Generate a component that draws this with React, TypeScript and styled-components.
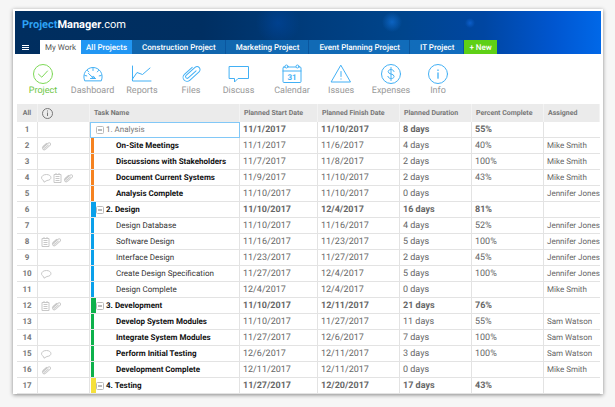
import React from "react";
import styled, { createGlobalStyle } from "styled-components";

const GlobalStyle = createGlobalStyle`
  * { box-sizing: border-box; }
  body {
    margin: 0;
    background: #f6f6f6;
    font-family: Roboto, "Liberation Sans", sans-serif;
    font-size: 9px;
    color: #666;
    text-rendering: geometricPrecision;
  }
  button {
    font: inherit;
    color: inherit;
    border: 0;
    padding: 0;
    margin: 0;
    background: none;
    cursor: pointer;
    text-rendering: inherit;
  }
`;

const Card = styled.main`
  margin: 9px 12px 13px 13px;
  padding: 2px 2px 0;
  background: #fff;
  box-shadow: 0 1px 4px rgba(0, 0, 0, 0.45);
  overflow: hidden;
`;

const Banner = styled.header`
  background:
    radial-gradient(circle at 263px 12px, rgba(0, 80, 190, 0.35) 0, transparent 22px),
    radial-gradient(circle at 377px 11px, rgba(20, 120, 230, 0.6) 0, transparent 10px),
    radial-gradient(circle at 455px 12px, rgba(20, 110, 230, 0.6) 0, transparent 5px),
    linear-gradient(90deg, #002e5f 0%, #002f62 32%, #003c7c 50%, #00458c 66%, #0046a2 80%, #0056d0 92%, #0068e8 100%);
`;

const Brand = styled.div`
  display: flex;
  align-items: center;
  height: 29px;
  padding: 0 7px 3px;
  font-size: 11px;
  color: #fff;
`;

const BrandBlue = styled.span`
  font-weight: 700;
  color: #2ea3f5;
`;

const BrandBold = styled.span`
  font-weight: 700;
`;

const TabBar = styled.nav`
  display: flex;
  height: 14px;
  font-size: 8px;
`;

const MenuButton = styled.button`
  display: flex;
  align-items: center;
  width: 25px;
  padding-left: 7px;
  color: #fff;
`;

type TabKind = "current" | "bright" | "plain" | "create";

const tabFill: Record<TabKind, string> = {
  current: "#fff",
  bright: "#2196f3",
  plain: "rgba(24, 125, 205, 0.7)",
  create: "#5fd016",
};

const Tab = styled.button<{ $kind: TabKind }>`
  padding: 0 ${(p) => (p.$kind === "plain" ? 10 : 5)}px;
  line-height: 15px;
  white-space: nowrap;
  font-weight: ${(p) => (p.$kind === "current" ? 400 : 500)};
  color: ${(p) => (p.$kind === "current" ? "#555" : "#fff")};
  background: ${(p) => tabFill[p.$kind]};
  box-shadow: ${(p) => (p.$kind === "plain" ? "inset -1px 0 #0a569f" : "none")};
`;

const Toolbar = styled.nav`
  display: grid;
  grid-template-columns: 50px 49px 50px 48px 47px 60px 38px 62px 32px;
  height: 50px;
  padding: 9px 0 0 3px;
`;

const Tool = styled.button<{ $active?: boolean }>`
  display: flex;
  flex-direction: column;
  align-items: center;
  gap: 1px;
  line-height: 13px;
  color: ${(p) => (p.$active ? "#6cc644" : "#999")};

  svg {
    color: ${(p) => (p.$active ? "#7ed957" : "#42b0f5")};
  }
`;

const Grid = styled.table`
  width: calc(100% - 3px);
  margin: 0 1px 0 2px;
  table-layout: fixed;
  border-collapse: separate;
  border-spacing: 0;
`;

const Head = styled.th`
  height: 18px;
  padding: 0 4px;
  text-align: left;
  font-size: 7px;
  line-height: 16px;
  font-weight: 700;
  color: #777;
  background: #ebebeb;
  border-right: 1px solid #f3f3f3;
  white-space: nowrap;
  overflow: hidden;

  &:first-child {
    padding: 0;
    text-align: center;
  }

  svg {
    display: block;
  }
`;

const Cell = styled.td<{ $bold?: boolean; $small?: boolean }>`
  height: 16px;
  padding: 1px 3px 0;
  line-height: 14px;
  font-size: ${(p) => (p.$small ? 8 : 9)}px;
  font-weight: ${(p) => (p.$bold ? 700 : 400)};
  border-right: 1px solid #e3e3e3;
  border-bottom: 1px solid #e3e3e3;
  white-space: nowrap;
  overflow: hidden;

  &:last-child {
    border-right: 0;
  }
`;

const NumberCell = styled(Cell)`
  padding: 1px 0 0;
  text-align: center;
  font-size: 8px;
  font-weight: 700;
  color: #777;
`;

const Marks = styled.div`
  display: flex;
  align-items: center;
  gap: 1px;
  height: 14px;
  color: #c8c8c8;
`;

const NameCell = styled(Cell)<{ $selected?: boolean }>`
  padding: 0;
  font-size: 8px;
  color: ${(p) => (p.$selected ? "#777" : p.$bold ? "#111" : "#333")};
  outline: ${(p) => (p.$selected ? "1px solid #82c8f7" : "none")};
  outline-offset: -1px;
`;

const NameLine = styled.div`
  display: flex;
  align-items: center;
  height: 15px;
  line-height: 16px;
`;

const Stripe = styled.span<{ $color: string; $wide?: boolean }>`
  flex: none;
  align-self: stretch;
  width: ${(p) => (p.$wide ? 5 : 3)}px;
  margin: 0 ${(p) => (p.$wide ? 0 : 22)}px -1px 1px;
  background: ${(p) => p.$color};
`;

const Toggle = styled.button`
  display: flex;
  margin-right: 2px;
  color: #aaa;
`;

const stroke = { fill: "none", stroke: "currentColor", strokeWidth: 1 } as const;

const ToolSvg = ({ children }: { children: React.ReactNode }) => (
  <svg width="22" height="21" viewBox="0 0 22 21" {...stroke} strokeLinejoin="round" strokeLinecap="round">
    {children}
  </svg>
);

const PaperClip = () => (
  <path
    transform="translate(11.500 11) rotate(-42)"
    d="M5-4.500H-5.500a4 4 0 0 0 0 8H7a3 3 0 0 0 0-6H-5a1.600 1.600 0 0 0 0 3.200H5.500"
  />
);

const tools: { label: string; icon: React.ReactNode }[] = [
  { label: "Project", icon: <><circle cx="11" cy="11" r="9.500" /><path d="M6.500 11.200 9.800 14.200 15.500 8" /></> },
  {
    label: "Dashboard",
    icon: <>
      <path d="M2.600 17.500C-.2 10.500 5 4.500 11 4.500s11.200 6 8.400 13Z" />
      <path d="M11 5.500v2M5.500 7.500l1.200 1.400M16.500 7.500l-1.200 1.400M2.800 12.500l2 .4M19.200 12.500l-2 .4M6.500 10.500l4 3.800M8.500 15.500h5" />
      <circle cx="11.300" cy="14.400" r="1" />
    </>,
  },
  { label: "Reports", icon: <path d="M1.500 3v15H20M1.500 16 6 9.500l5.500 2L19 5" /> },
  { label: "Files", icon: <PaperClip /> },
  { label: "Discuss", icon: <path d="M1.500 3.500h19v12H10L6.500 19v-3.500h-5Z" /> },
  {
    label: "Calendar",
    icon: <>
      <rect x="2" y="4" width="18" height="15.500" rx="1" />
      <path d="M2 8h18" />
      <circle cx="5.500" cy="3.500" r="1.500" fill="#fff" />
      <circle cx="16.500" cy="3.500" r="1.500" fill="#fff" />
      <text x="11" y="16.500" textAnchor="middle" fontSize="8" fontWeight="700" fill="currentColor" stroke="none">31</text>
    </>,
  },
  { label: "Issues", icon: <><path d="M11 2.500 20.500 19h-19Z" /><path d="M11 8.500v5M11 15.800v.4" /></> },
  {
    label: "Expenses",
    icon: <><circle cx="11" cy="11" r="9.500" /><path d="M14 8.500c-.4-2.800-5.800-2.700-5.800.2 0 3 5.900 1.700 5.900 4.700 0 2.900-5.800 3-6.200 0M11 4.500v13" /></>,
  },
  { label: "Info", icon: <><circle cx="11" cy="11" r="9.500" /><path d="M11 9.800v5.400M11 7v.4" strokeWidth="1.300" /></> },
];

const ClipMark = () => (
  <svg width="11" height="11" viewBox="0 0 23 23" {...stroke} strokeWidth={2}>
    <PaperClip />
  </svg>
);

const NoteMark = () => (
  <svg width="9" height="10" viewBox="0 0 9 10" {...stroke}>
    <path d="M1 1.500h7v8H1ZM2.500 3.500h4M2.500 5.500h4M2.500 7.500h4M3 0v2M6 0v2" />
  </svg>
);

const ChatMark = () => (
  <svg width="11" height="10" viewBox="0 0 11 10" {...stroke}>
    <path d="M2.600 7.500C-1 6 .2 1.500 5.500 1.500s6.300 5.600.4 6L3 9.200Z" />
  </svg>
);

const MinusBox = () => (
  <svg width="8" height="8" viewBox="0 0 8 8" {...stroke}>
    <rect x=".5" y=".5" width="7" height="7" rx="1" stroke="#bbb" />
    <path d="M2 4h4" stroke="#777" />
  </svg>
);

const markIcons = { chat: ChatMark, note: NoteMark, clip: ClipMark };
type Mark = keyof typeof markIcons;

interface Task {
  name: string;
  start: string;
  finish: string;
  days: number;
  percent?: string;
  assigned?: string;
  group?: boolean;
  bold?: boolean;
  color?: string;
  marks?: Mark[];
}

const ORANGE = "#f58220";
const BLUE = "#0aa0ea";
const GREEN = "#0db14b";
const YELLOW = "#f5e03c";

const tasks: Task[] = [
  { name: "1. Analysis", start: "11/1/2017", finish: "11/10/2017", days: 8, percent: "55%", group: true },
  { name: "On-Site Meetings", start: "11/1/2017", finish: "11/6/2017", days: 4, percent: "40%", assigned: "Mike Smith", bold: true, color: ORANGE, marks: ["clip"] },
  { name: "Discussions with Stakeholders", start: "11/7/2017", finish: "11/8/2017", days: 2, percent: "100%", assigned: "Mike Smith", bold: true, color: ORANGE },
  { name: "Document Current Systems", start: "11/9/2017", finish: "11/10/2017", days: 2, percent: "43%", assigned: "Mike Smith", bold: true, color: ORANGE, marks: ["chat", "note", "clip"] },
  { name: "Analysis Complete", start: "11/10/2017", finish: "11/10/2017", days: 0, assigned: "Jennifer Jones", bold: true, color: ORANGE },
  { name: "2. Design", start: "11/10/2017", finish: "12/4/2017", days: 16, percent: "81%", group: true, bold: true, color: BLUE },
  { name: "Design Database", start: "11/10/2017", finish: "11/16/2017", days: 4, percent: "52%", assigned: "Jennifer Jones", color: BLUE },
  { name: "Software Design", start: "11/16/2017", finish: "11/23/2017", days: 5, percent: "100%", assigned: "Jennifer Jones", color: BLUE, marks: ["note", "clip"] },
  { name: "Interface Design", start: "11/23/2017", finish: "11/27/2017", days: 2, percent: "45%", assigned: "Jennifer Jones", color: BLUE },
  { name: "Create Design Specification", start: "11/27/2017", finish: "12/4/2017", days: 5, percent: "100%", assigned: "Jennifer Jones", color: BLUE, marks: ["chat"] },
  { name: "Design Complete", start: "12/4/2017", finish: "12/4/2017", days: 0, assigned: "Mike Smith", color: BLUE },
  { name: "3. Development", start: "11/10/2017", finish: "12/11/2017", days: 21, percent: "76%", group: true, bold: true, color: GREEN, marks: ["note", "clip"] },
  { name: "Develop System Modules", start: "11/10/2017", finish: "11/27/2017", days: 11, percent: "55%", assigned: "Sam Watson", bold: true, color: GREEN },
  { name: "Integrate System Modules", start: "11/27/2017", finish: "12/6/2017", days: 7, percent: "100%", assigned: "Sam Watson", bold: true, color: GREEN },
  { name: "Perform Initial Testing", start: "12/6/2017", finish: "12/11/2017", days: 3, percent: "100%", assigned: "Sam Watson", bold: true, color: GREEN, marks: ["chat"] },
  { name: "Development Complete", start: "12/11/2017", finish: "12/11/2017", days: 0, assigned: "Mike Smith", bold: true, color: GREEN, marks: ["clip"] },
  { name: "4. Testing", start: "11/27/2017", finish: "12/20/2017", days: 17, percent: "43%", group: true, bold: true, color: YELLOW },
];

const TaskRow = ({ task, index }: { task: Task; index: number }) => {
  const selected = index === 0;
  return (
    <tr>
      <NumberCell>{index + 1}</NumberCell>
      <Cell>
        <Marks>
          {task.marks?.map((m) => {
            const Icon = markIcons[m];
            return <Icon key={m} />;
          })}
        </Marks>
      </Cell>
      <NameCell $bold={task.bold} $selected={selected}>
        <NameLine>
          <Stripe $color={task.color ?? "transparent"} $wide={task.group} />
          {task.group && (
            <Toggle aria-label={`Collapse ${task.name}`}>
              <MinusBox />
            </Toggle>
          )}
          {task.name}
        </NameLine>
      </NameCell>
      <Cell $bold={task.group}>{task.start}</Cell>
      <Cell $bold={task.group}>{task.finish}</Cell>
      <Cell $bold={task.group}>{task.days} days</Cell>
      <Cell $bold={task.group}>{task.percent}</Cell>
      <Cell $small>{task.assigned}</Cell>
    </tr>
  );
};

const Col = styled.col<{ $width?: number }>`
  width: ${(p) => (p.$width ? `${p.$width}px` : "auto")};
`;

const projectTabs = ["Construction Project", "Marketing Project", "Event Planning Project", "IT Project"];

export default function App() {
  return (
    <>
      <GlobalStyle />
      <Card>
        <Banner>
          <Brand>
            <BrandBlue>Project</BrandBlue>
            <BrandBold>Manager</BrandBold>
            .com
          </Brand>
          <TabBar>
            <MenuButton aria-label="Menu">
              <svg width="7" height="7" viewBox="0 0 7 7" {...stroke}>
                <path d="M0 1.500h7M0 3.500h7M0 5.500h7" />
              </svg>
            </MenuButton>
            <Tab $kind="current">My Work</Tab>
            <Tab $kind="bright">All Projects</Tab>
            {projectTabs.map((t) => (
              <Tab key={t} $kind="plain">{t}</Tab>
            ))}
            <Tab $kind="create">+ New</Tab>
          </TabBar>
        </Banner>
        <Toolbar>
          {tools.map((t, i) => (
            <Tool key={t.label} $active={i === 0}>
              <ToolSvg>{t.icon}</ToolSvg>
              {t.label}
            </Tool>
          ))}
        </Toolbar>
        <Grid>
          <colgroup>
            {[21, 52, 150, 78, 82, 72, 72].map((w, i) => (
              <Col key={i} $width={w} />
            ))}
            <Col />
          </colgroup>
          <thead>
            <tr>
              <Head>All</Head>
              <Head aria-label="Information">
                <svg width="11" height="11" viewBox="0 0 11 11" {...stroke}>
                  <circle cx="5.500" cy="5.500" r="5" />
                  <path d="M5.500 4.500v3.500M5.500 2.500v1" />
                </svg>
              </Head>
              <Head>Task Name</Head>
              <Head>Planned Start Date</Head>
              <Head>Planned Finish Date</Head>
              <Head>Planned Duration</Head>
              <Head>Percent Complete</Head>
              <Head>Assigned</Head>
            </tr>
          </thead>
          <tbody>
            {tasks.map((t, i) => (
              <TaskRow key={t.name} task={t} index={i} />
            ))}
          </tbody>
        </Grid>
      </Card>
    </>
  );
}
